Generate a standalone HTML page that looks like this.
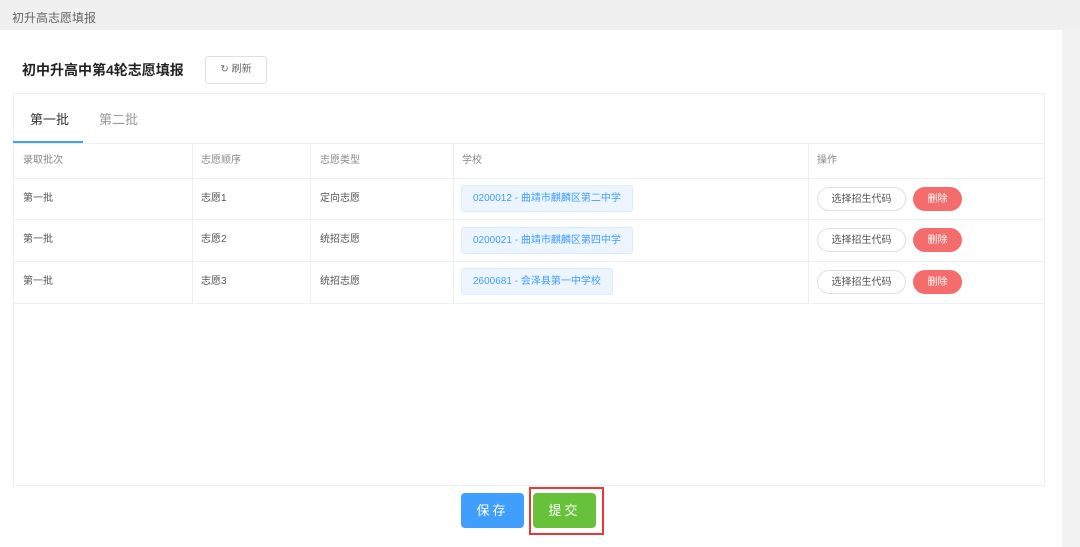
<!DOCTYPE html>
<html><head><meta charset="utf-8"><style>
*{margin:0;padding:0;box-sizing:border-box}
body{width:1080px;height:547px;background:#f2f2f3;font-family:"Liberation Sans","Noto Sans CJK SC",sans-serif;position:relative;overflow:hidden;color:#606266}
.abs{position:absolute}
.top{left:0;top:0;width:1080px;height:30px;background:#f0f0f1;font-size:12px;color:#666;padding:9px 0 0 12px}
.panel{left:0;top:30px;width:1062px;height:517px;background:#fff}
.title{left:22px;top:60px;font-size:14px;font-weight:bold;color:#222}
.refresh{left:205px;top:56px;width:62px;height:28px;border:1px solid #dcdfe6;border-radius:3px;font-size:10px;color:#666;text-align:center;line-height:26px}
.box{left:13px;top:93px;width:1032px;height:393px;border:1px solid #ebeef5;background:#fff}
.tab{top:109px;font-size:13px;font-weight:normal}
.ul{left:13px;top:141px;width:70px;height:2px;background:#409eff}
.hl{height:1px;background:#ebeef5;left:13px;width:1032px}
.vl{width:1px;background:#ebeef5;top:143px;height:160px}
.c{font-size:10px;color:#555;line-height:12px}
.tag{left:461px;height:27px;background:#ecf5ff;border:1px solid #d9ecff;border-radius:3px;color:#409eff;font-size:10px;line-height:26px;padding:0 11px}
.sel{left:817px;width:89px;height:24px;border:1px solid #dcdfe6;border-radius:12px;font-size:10px;color:#555;text-align:center;line-height:24px}
.del{left:913px;width:49px;height:24px;background:#f56c6c;border-radius:12px;font-size:10px;color:#fff;text-align:center;line-height:25px}
.btn{top:493px;width:63px;height:35px;border-radius:4px;color:#fff;font-size:13px;text-align:center;line-height:35px;letter-spacing:3px}
</style></head><body>
<div class="abs top">初升高志愿填报</div>
<div class="abs panel"></div>
<div class="abs title">初中升高中第4轮志愿填报</div>
<div class="abs refresh">↻ 刷新</div>
<div class="abs box"></div>
<div class="abs tab" style="left:30px;color:#303133">第一批</div>
<div class="abs tab" style="left:99px;color:#999">第二批</div>
<div class="abs ul"></div>
<div class="abs hl" style="top:143px"></div>
<div class="abs hl" style="top:178px"></div>
<div class="abs hl" style="top:219px"></div>
<div class="abs hl" style="top:261px"></div>
<div class="abs hl" style="top:303px"></div>
<div class="abs vl" style="left:192px"></div>
<div class="abs vl" style="left:310px"></div>
<div class="abs vl" style="left:453px"></div>
<div class="abs vl" style="left:808px"></div>
<div class="abs c" style="left:23px;top:155px;color:#888">录取批次</div>
<div class="abs c" style="left:201px;top:155px;color:#888">志愿顺序</div>
<div class="abs c" style="left:320px;top:155px;color:#888">志愿类型</div>
<div class="abs c" style="left:462px;top:155px;color:#888">学校</div>
<div class="abs c" style="left:817px;top:155px;color:#888">操作</div>

<div class="abs c" style="left:23px;top:193px">第一批</div>
<div class="abs c" style="left:201px;top:193px">志愿1</div>
<div class="abs c" style="left:320px;top:193px">定向志愿</div>
<div class="abs tag" style="top:185px">0200012 - 曲靖市麒麟区第二中学</div>
<div class="abs sel" style="top:187px">选择招生代码</div>
<div class="abs del" style="top:187px">删除</div>

<div class="abs c" style="left:23px;top:234px">第一批</div>
<div class="abs c" style="left:201px;top:234px">志愿2</div>
<div class="abs c" style="left:320px;top:234px">统招志愿</div>
<div class="abs tag" style="top:227px">0200021 - 曲靖市麒麟区第四中学</div>
<div class="abs sel" style="top:228px">选择招生代码</div>
<div class="abs del" style="top:228px">删除</div>

<div class="abs c" style="left:23px;top:276px">第一批</div>
<div class="abs c" style="left:201px;top:276px">志愿3</div>
<div class="abs c" style="left:320px;top:276px">统招志愿</div>
<div class="abs tag" style="top:268px">2600681 - 会泽县第一中学校</div>
<div class="abs sel" style="top:270px">选择招生代码</div>
<div class="abs del" style="top:270px">删除</div>

<div class="abs btn" style="left:461px;background:#409eff">保存</div>
<div class="abs btn" style="left:533px;background:#67c23a">提交</div>
<div class="abs" style="left:529px;top:487px;width:75px;height:48px;border:2px solid #e53935"></div>
</body></html>
